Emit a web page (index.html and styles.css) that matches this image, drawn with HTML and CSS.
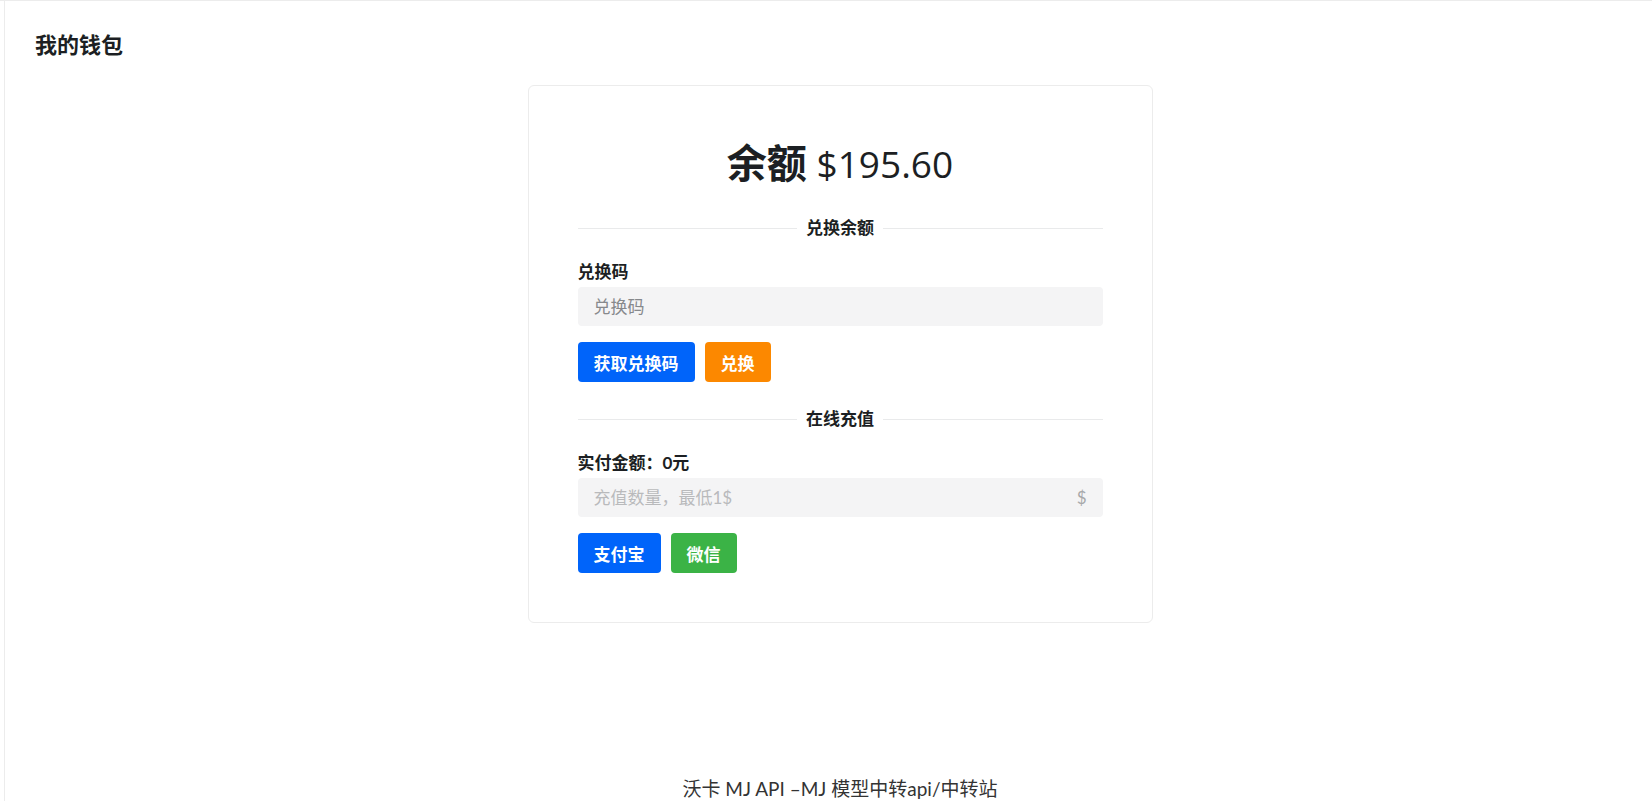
FILE: index.html
```html
<!DOCTYPE html>
<html lang="zh-CN">
<head>
    <meta charset="UTF-8">
    <meta name="viewport" content="width=device-width, initial-scale=1.0">
    <title>我的钱包</title>
    <link rel="stylesheet" href="styles.css">
</head>
<body>
    <div class="app">
        <div class="side-gutter"></div>
        <div class="layout">
            <header class="page-header">
                <h3>我的钱包</h3>
            </header>
            <main class="page-content">
                <div class="wallet-card">
                    <h2 class="balance"><span class="balance-label">余额</span> <span class="balance-value">$195.60</span></h2>

                    <div class="divider"><span>兑换余额</span></div>
                    <div class="field-label">兑换码</div>
                    <div class="input-box">
                        <input type="text" placeholder="兑换码">
                    </div>
                    <div class="button-row">
                        <button class="btn btn-primary">获取兑换码</button>
                        <button class="btn btn-warning">兑换</button>
                    </div>

                    <div class="divider"><span>在线充值</span></div>
                    <div class="field-label">实付金额：0元</div>
                    <div class="input-box">
                        <input type="text" class="input-light" placeholder="充值数量，最低1$">
                        <span class="suffix">$</span>
                    </div>
                    <div class="button-row">
                        <button class="btn btn-primary">支付宝</button>
                        <button class="btn btn-success">微信</button>
                    </div>
                </div>
            </main>
            <footer class="page-footer">沃卡 MJ API –MJ 模型中转api/中转站</footer>
        </div>
    </div>
</body>
</html>
```

FILE: styles.css
```css
html, body {
    height: 100%;
    margin: 0;
    background-color: #ffffff;
    font-family: 'Lato', 'Noto Sans CJK SC', sans-serif;
    color: #1c1f23;
    overflow: hidden;
}
.app {
    display: flex;
    height: 100vh;
    border-top: 1px solid #ececec;
    box-sizing: border-box;
}
.side-gutter {
    width: 4px;
    flex-shrink: 0;
}
.layout {
    flex: 1;
    display: flex;
    flex-direction: column;
    border-left: 1px solid #ececec;
}
.page-header {
    padding: 29px 30px 0;
}
.page-header h3 {
    margin: 0;
    font-size: 22px;
    line-height: 30px;
    font-weight: 700;
}
.page-content {
    display: flex;
    justify-content: center;
    padding: 25px 0 0 23px;
}
.wallet-card {
    width: 625px;
    box-sizing: border-box;
    padding: 49px;
    border: 1px solid #ececec;
    border-radius: 6px;
}
.balance {
    height: 56px;
    margin: 0;
    text-align: center;
    font-size: 38px;
    line-height: 56px;
    font-weight: 400;
}
.balance-label {
    font-size: 40px;
    line-height: 1;
    font-weight: 700;
}
.balance-value {
    font-family: 'Open Sans', 'Noto Sans CJK SC', sans-serif;
    font-size: 37px;
    line-height: 1;
}
.divider {
    display: flex;
    align-items: center;
    gap: 9px;
    margin: 25px 0 20px;
    font-size: 17px;
    line-height: 24px;
    font-weight: 700;
}
.divider::before,
.divider::after {
    content: '';
    flex: 1;
    border-top: 1px solid #e9eaeb;
}
.field-label {
    font-size: 17px;
    line-height: 24px;
    font-weight: 700;
}
.input-box {
    display: flex;
    align-items: center;
    height: 39px;
    margin-top: 3px;
    padding: 0 16px;
    background-color: #f4f4f5;
    border-radius: 4px;
}
.input-box input {
    flex: 1;
    min-width: 0;
    border: none;
    outline: none;
    background: transparent;
    padding: 0;
    font-family: inherit;
    font-size: 17px;
    color: #1c1f23;
}
.input-box input::placeholder {
    color: #87898c;
}
.input-box input.input-light::placeholder {
    color: #b9babc;
}
.suffix {
    font-size: 17px;
    color: #a7a8aa;
}
.button-row {
    display: flex;
    gap: 10px;
    margin-top: 16px;
}
.btn {
    height: 40px;
    padding: 0 16px;
    border: none;
    border-radius: 4px;
    color: #ffffff;
    font-family: inherit;
    font-size: 17px;
    font-weight: 700;
    cursor: pointer;
}
.btn-primary {
    background-color: #0064fa;
}
.btn-warning {
    background-color: #fc8800;
}
.btn-success {
    background-color: #3bb346;
}
.page-footer {
    margin-top: 152px;
    padding-left: 23px;
    text-align: center;
    font-size: 19px;
    line-height: 28px;
    color: #333333;
}
```
